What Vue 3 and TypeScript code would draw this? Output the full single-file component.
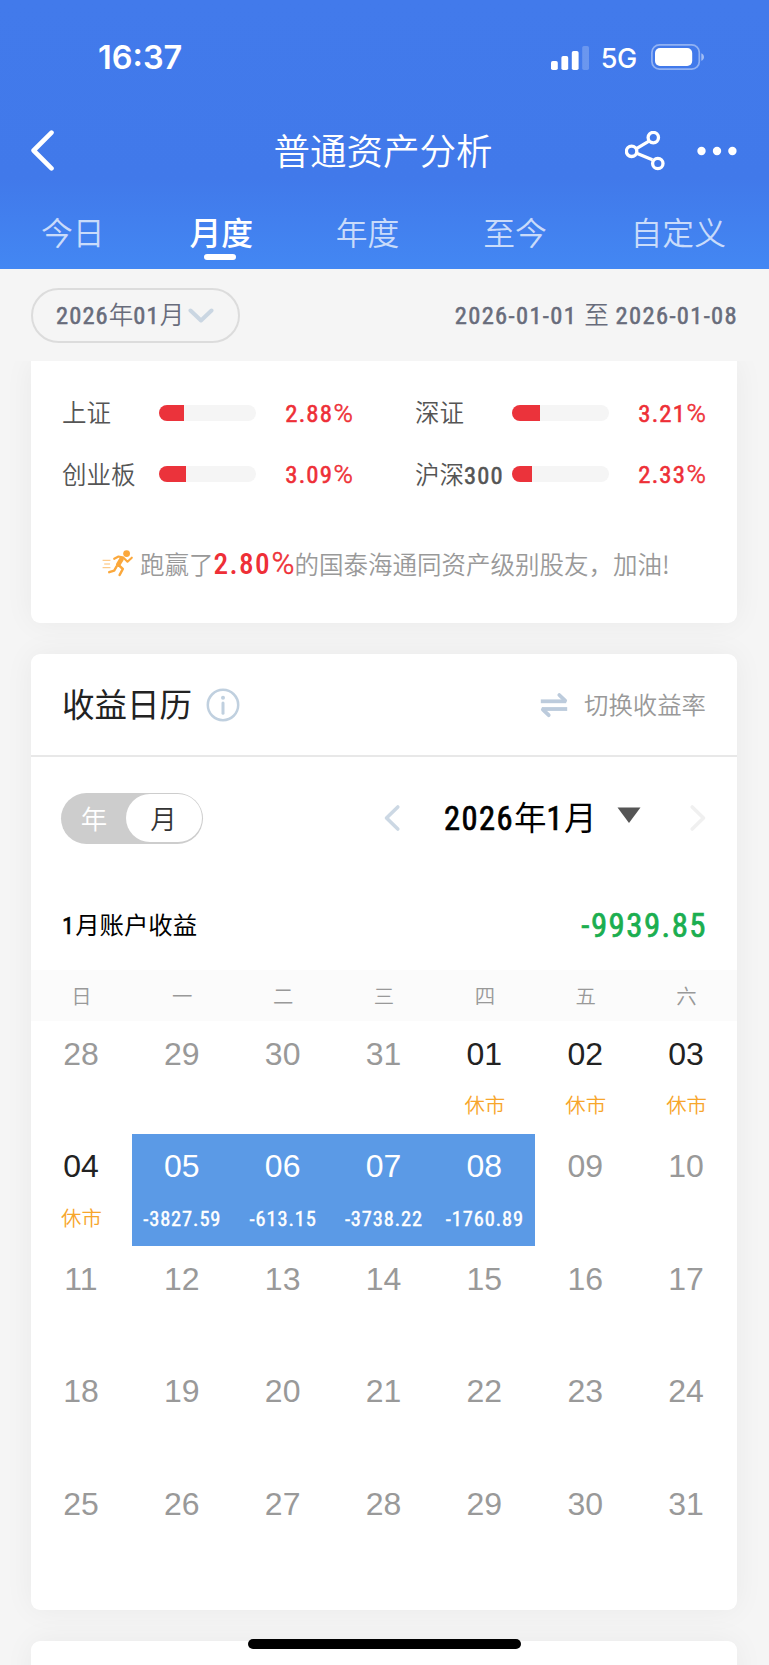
<script setup lang="ts">
interface IndexRow { name: string; num?: string; rate: string; fill: number }
interface Day { d: string; kind: 'off' | 'rest' | 'hit'; note?: string }

const tabs: string[] = ['今日', '月度', '年度', '至今', '自定义']
const activeTab = '月度'

const indices: IndexRow[] = [
  { name: '上证', rate: '2.88', fill: 25 },
  { name: '深证', rate: '3.21', fill: 28 },
  { name: '创业板', rate: '3.09', fill: 27 },
  { name: '沪深', num: '300', rate: '2.33', fill: 20 },
]

const weekdays: string[] = ['日', '一', '二', '三', '四', '五', '六']

const results: Record<number, string> = { 5: '-3827.59', 6: '-613.15', 7: '-3738.22', 8: '-1760.89' }
const days: Day[] = [28, 29, 30, 31].map((n): Day => ({ d: String(n), kind: 'off' }))
for (let n = 1; n <= 31; n++) {
  const d = String(n).padStart(2, '0')
  if (n <= 4) days.push({ d, kind: 'rest', note: '休市' })
  else if (results[n]) days.push({ d, kind: 'hit', note: results[n] })
  else days.push({ d, kind: 'off' })
}
</script>

<template>
  <div class="screen">
    <header class="head">
      <div class="status">
        <span class="time">16:37</span>
        <div class="status-right">
          <svg class="signal" width="38" height="24" viewBox="0 0 38 24" fill="#fff">
            <rect x="0" y="15" width="6.8" height="9" rx="1.8" />
            <rect x="10.4" y="10" width="6.8" height="14" rx="1.8" />
            <rect x="20.8" y="5" width="6.8" height="19" rx="1.8" />
            <rect x="31.2" y="0" width="6.8" height="24" rx="1.8" opacity=".22" />
          </svg>
          <span class="net">5G</span>
          <svg width="54" height="26" viewBox="0 0 54 26">
            <rect x=".9" y=".9" width="47.4" height="24.2" rx="7.6" fill="none" stroke="#fff" stroke-opacity=".42" stroke-width="1.7" />
            <rect x="4" y="4" width="37.2" height="18" rx="5" fill="#fff" />
            <path d="M50.3 9.2c3.6 1.5 3.6 6.1 0 7.6z" fill="#fff" opacity=".5" />
          </svg>
        </div>
      </div>
      <div class="nav">
        <svg width="24" height="42" viewBox="0 0 24 42" fill="none" stroke="#fff" stroke-width="4.6" stroke-linecap="round" stroke-linejoin="round">
          <path d="M20.5 2.6 2.6 20.5 20.5 38.4" />
        </svg>
        <h1>普通资产分析</h1>
        <div class="nav-icons">
          <svg width="40" height="40" viewBox="0 0 40 40" fill="none" stroke="#fff" stroke-width="3.3">
            <path d="m11 17.8 13-7.6M11.6 22.3l15.8 6.5" />
            <circle cx="28.3" cy="6.6" r="5.2" />
            <circle cx="6.6" cy="20.3" r="5.2" />
            <circle cx="32.8" cy="32.5" r="5.2" />
          </svg>
          <svg width="40" height="10" viewBox="0 0 40 10" fill="#fff">
            <circle cx="4.5" cy="5" r="4.2" /><circle cx="20" cy="5" r="4.2" /><circle cx="35.4" cy="5" r="4.2" />
          </svg>
        </div>
      </div>
      <nav class="tabs">
        <span v-for="t in tabs" :key="t" class="tab" :class="{ on: t === activeTab }">{{ t }}</span>
      </nav>
    </header>

    <div class="filter">
      <div class="pill">
        <span><span class="din">2026</span>年<span class="din">01</span>月</span>
        <svg width="26" height="16" viewBox="0 0 26 16" fill="none" stroke="#cad6e2" stroke-width="4" stroke-linecap="round" stroke-linejoin="round">
          <path d="m2.5 2.5 10.5 10 10.5-10" />
        </svg>
      </div>
      <span class="range"><span class="din">2026-01-01 </span>至<span class="din"> 2026-01-08</span></span>
    </div>

    <section class="card market">
      <div class="indices">
        <div v-for="i in indices" :key="i.name" class="index">
          <span class="iname">{{ i.name }}<span v-if="i.num" class="din">{{ i.num }}</span></span>
          <span class="bar"><span class="fill" :style="{ width: i.fill + 'px' }"></span></span>
          <span class="rate din">{{ i.rate }}<span class="pc">%</span></span>
        </div>
      </div>
      <p class="beat">
        <svg width="32" height="27" viewBox="0 0 32 27" fill="none" stroke="#fba83c" stroke-linecap="round" stroke-linejoin="round">
          <circle cx="24.6" cy="3.6" r="3.4" fill="#fba83c" stroke="none" />
          <path d="m12.2 8.8 4.3-2.3 5 1.1" stroke-width="2.2" />
          <path d="m19.6 9-3.4 5.6" stroke-width="4.6" />
          <path d="m22.5 8.7 3 3 4.3-4" stroke-width="2.1" />
          <path d="m17 15.4 3.8 3.6-3.2 6" stroke-width="2.5" />
          <path d="m14.6 16.4-2.4 4.2-5 1.6" stroke-width="2.4" />
          <path d="M1 10.3h7M2.6 14h5M1 17.7h7" stroke-width="1" opacity=".75" />
        </svg>
        <span class="beat-text">跑赢了<b class="din">2.80<span class="pc">%</span></b>的国泰海通同资产级别股友，加油!</span>
      </p>
    </section>

    <section class="card calendar">
      <div class="cal-head">
        <h2>收益日历</h2>
        <svg class="info" width="34" height="34" viewBox="0 0 34 34" fill="none" stroke="#c0d0df">
          <circle cx="17" cy="17" r="15.2" stroke-width="2.5" />
          <circle cx="17" cy="9.7" r="2" fill="#c0d0df" stroke="none" />
          <path d="M17 15v10.2" stroke-width="3" stroke-linecap="round" />
        </svg>
        <div class="swap">
          <svg width="28" height="26" viewBox="0 0 28 26" fill="none" stroke="#bccbdc" stroke-width="3.8" stroke-linejoin="round">
            <path d="M.8 9.3h25.4" /><path d="m19.3 3 5.8 5.6" stroke-linecap="round" />
            <path d="M27.2 17H1.8" /><path d="m8.7 23.2-5.8-5.6" stroke-linecap="round" />
          </svg>
          <span>切换收益率</span>
        </div>
      </div>

      <div class="picker">
        <div class="toggle"><span class="opt">年</span><span class="opt sel">月</span></div>
        <div class="month">
          <svg width="18" height="28" viewBox="0 0 18 28" fill="none" stroke="#ccd8e4" stroke-width="3.6" stroke-linecap="round" stroke-linejoin="round"><path d="M14.8 3 3.5 14l11.3 11" /></svg>
          <span class="mlabel"><span class="din">2026</span>年<span class="din">1</span>月</span>
          <svg class="caret" width="24" height="16" viewBox="0 0 24 16"><path d="M.5.5h23L12 16z" fill="#555" /></svg>
          <svg width="18" height="28" viewBox="0 0 18 28" fill="none" stroke="#f0f0f0" stroke-width="3.6" stroke-linecap="round" stroke-linejoin="round"><path d="M3.2 3 14.5 14 3.2 25" /></svg>
        </div>
      </div>

      <div class="total">
        <span><span class="din">1</span>月账户收益</span>
        <span class="din sum">-9939.85</span>
      </div>

      <div class="week"><span v-for="w in weekdays" :key="w">{{ w }}</span></div>
      <div class="grid">
        <div v-for="(x, k) in days" :key="k" class="day" :class="x.kind">
          <span class="num">{{ x.d }}</span>
          <span v-if="x.note" class="note din">{{ x.note }}</span>
        </div>
      </div>
    </section>

    <section class="card next"></section>
    <div class="home"></div>
  </div>
</template>

<style>
body { margin: 0; background: #f5f5f5; }
</style>

<style scoped>
.screen {
  position: relative;
  width: 769px;
  height: 1665px;
  overflow: hidden;
  background: #f5f5f5;
  font-family: "Noto Sans CJK SC", sans-serif;
  font-weight: 350;
  box-sizing: border-box;
}
svg { display: block; flex: none; }
h1, h2, p { margin: 0; font-weight: 350; }
.din { font-family: Roboto, "Noto Sans CJK SC", sans-serif; font-stretch: 87%; font-weight: 400; letter-spacing: .045em; -webkit-text-stroke: .022em currentColor; }

.head { height: 269px; background: linear-gradient(#427aeb 0, #4179ea 178px, #4387f3 269px); color: #fff; }
.status { display: flex; justify-content: space-between; height: 112px; padding: 0 64px 0 98px; }
.time { font: 600 32.5px/40px Inter, sans-serif; margin-top: 38px; }
.status-right { display: flex; align-items: center; height: 26px; margin-top: 44px; }
.signal { margin-top: 1px; }
.net { font: 500 27px/26px Inter, sans-serif; margin: 3px 14px 0 12px; letter-spacing: -.3px; }
.nav { display: flex; align-items: center; justify-content: space-between; height: 78px; padding: 0 32px 0 31px; }
.nav h1 { font-size: 36.5px; line-height: 50px; margin: -3px 0 0 84px; }
.nav-icons { display: flex; align-items: center; gap: 32px; margin-left: -2px; }
.tabs { display: flex; justify-content: space-between; padding: 17px 43px 0 41px; }
.tab { position: relative; font-size: 31.8px; line-height: 48px; color: rgba(255, 255, 255, .72); }
.tab.on { color: #fff; font-weight: 500; left: 1px; }
.tab.on::after {
  content: "";
  position: absolute;
  left: 50%;
  top: 47px;
  width: 32px;
  height: 6px;
  margin-left: -17px;
  border-radius: 3px;
  background: #fff;
}

.filter { display: flex; align-items: center; justify-content: space-between; height: 92px; padding: 1px 31px 0 31px; box-sizing: border-box; color: #686c7b; font-size: 24.5px; line-height: 36px; }
.pill { display: flex; align-items: center; gap: 4px; box-sizing: border-box; width: 209px; height: 55px; padding-left: 23px; border: 2px solid #dcdcdc; border-radius: 28px; }
.pill > span, .range { margin-top: -1px; }
.range .din { letter-spacing: .055em; }

.card { margin: 0 32px 0 31px; background: #fff; border-radius: 9px; box-shadow: 0 0 30px rgba(0, 0, 0, .05); }
.market { height: 262px; box-sizing: border-box; padding: 21px 31px 0 31px; border-radius: 0 0 9px 9px; clip-path: inset(0 -31px -31px -31px); }
.indices { display: grid; grid-template-columns: 353px 291px; }
.index { display: flex; align-items: center; width: 291px; height: 61.5px; }
.iname { width: 97px; margin-top: -2px; font-size: 24.5px; color: #555; white-space: nowrap; }
.bar { width: 97px; height: 16px; border-radius: 8px; background: #f5f5f5; overflow: hidden; }
.fill { display: block; height: 100%; background: #eb333b; }
.rate { flex: 1; text-align: right; font-size: 24.8px; color: #ee2f37; }
.pc { font-weight: 350; font-stretch: 100%; font-size: 1.06em; letter-spacing: 0; margin-left: .02em; }
.beat { display: flex; align-items: center; gap: 6px; height: 40px; margin: 38px 0 0 40px; color: #999; font-size: 24.5px; white-space: nowrap; }
.beat b { font-size: 29.3px; font-weight: 500; -webkit-text-stroke-width: 0; color: #ee2f37; }
.beat .pc { -webkit-text-stroke-width: .5px; }

.calendar { height: 956px; margin-top: 31px; }
.cal-head { display: flex; align-items: center; height: 101px; padding: 0 31px; border-bottom: 2px solid #e8e8e8; }
.cal-head h2 { font-size: 32.5px; line-height: 48px; margin-top: -3px; color: #222; font-weight: 400; }
.info { margin-left: 14px; }
.swap { display: flex; align-items: center; gap: 16px; margin-left: auto; font-size: 24.4px; color: #999; }
.swap span { margin-top: -2px; }
.picker { display: flex; align-items: center; justify-content: space-between; height: 122px; padding: 0 30px; }
.toggle { display: flex; box-sizing: border-box; width: 142px; height: 51px; padding: 1.5px; border-radius: 26px; background: #cdcdcd; font-size: 26.5px; line-height: 48px; text-align: center; color: #fff; }
.opt { width: 63px; }
.opt.sel { width: 76px; border-radius: 24px; background: #fff; color: #333; }
.month { display: flex; align-items: center; }
.mlabel { margin: -5px 0 0 43px; width: 150px; font-size: 32.5px; font-weight: 400; color: #000; white-space: nowrap; }
.caret { margin: -7px 48px 0 23px; }
.total { display: flex; align-items: center; justify-content: space-between; height: 91px; padding: 0 31px; font-size: 24.4px; font-weight: 400; color: #000; }
.total > span:first-child { margin-top: -2px; }
.total .sum { font-size: 32.8px; margin-right: -1px; color: #1bae50; padding-top: 3px; }
.week { display: grid; grid-template-columns: repeat(7, 1fr); height: 51px; background: #fbfbfb; font-size: 20.4px; line-height: 50px; text-align: center; color: #999; }
.grid { display: grid; grid-template-columns: repeat(7, 1fr); grid-auto-rows: 112.6px; }
.day { display: flex; flex-direction: column; align-items: center; }
.num { font: 400 32px/40px "Liberation Sans", Arial, sans-serif; margin: 12.5px 1px 0 0; color: #999; }
.note { margin-top: 17.5px; font-size: 20.4px; line-height: 30px; }
.rest .num { color: #222; }
.rest .note { color: #f7a62c; font-weight: 350; letter-spacing: 0; -webkit-text-stroke-width: 0; }
.hit { background: #5b9ae6; }
.hit .num, .hit .note { color: #fff; }
.next { height: 60px; margin-top: 31px; }
.home { position: absolute; left: 248px; top: 1639px; width: 273px; height: 10px; border-radius: 5px; background: #000; }
</style>
